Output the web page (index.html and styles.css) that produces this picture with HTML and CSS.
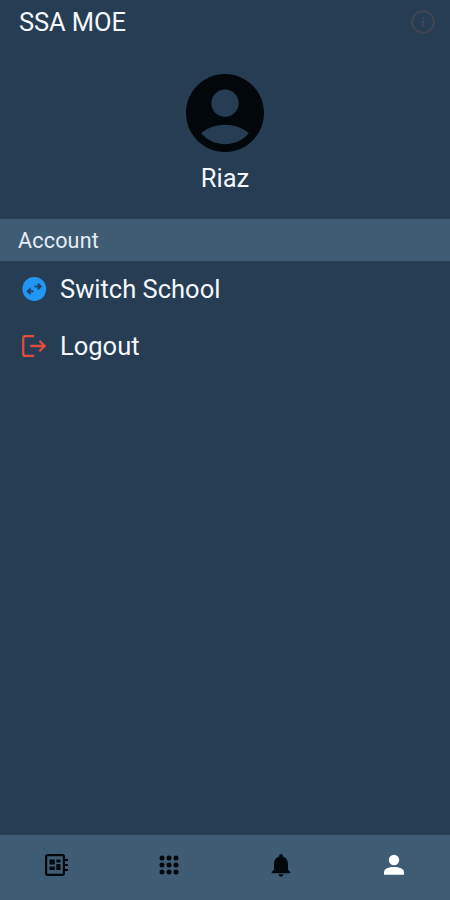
FILE: index.html
```html
<!DOCTYPE html>
<html lang="en">
<head>
<meta charset="utf-8">
<title>SSA MOE</title>
<link rel="stylesheet" href="styles.css">
</head>
<body>
<header class="bar">
  <h1 class="title">SSA MOE</h1>
  <svg class="info" viewBox="0 0 24 24"><circle cx="12" cy="12" r="10"/><path d="M12 11v5M12 7.500v2"/></svg>
</header>
<section class="profile">
  <svg class="avatar" viewBox="2 2 20 20"><path d="M12 2C6.48 2 2 6.48 2 12s4.48 10 10 10 10-4.48 10-10S17.52 2 12 2zm0 4c1.93 0 3.5 1.57 3.5 3.5S13.93 13 12 13s-3.5-1.57-3.5-3.5S10.07 6 12 6zm0 14c-2.03 0-4.43-.82-6.14-2.88a9.947 9.947 0 0 1 12.28 0C16.43 19.18 14.03 20 12 20z"/></svg>
  <div class="name">Riaz</div>
</section>
<h2 class="section">Account</h2>
<main class="menu">
  <a class="item">
    <svg class="icon" viewBox="0 0 28 28"><circle cx="14.3" cy="14" r="11.9" fill="#2196f3"/><path class="arrows" d="M14.500 11.500h6M17.800 8.700l2.900 2.800-2.900 2.800M13.500 16.200H8M10.600 13.400l-2.900 2.800 2.900 2.800"/></svg>
    <span>Switch School</span>
  </a>
  <a class="item">
    <svg class="icon logout" viewBox="0 0 28 28"><path d="M14.2 4.1H5.4Q3.2 4.1 3.2 6.3v15.4q0 2.2 2.2 2.2h8.8M10.2 14h14.5M19.4 8.8l5.3 5.2-5.3 5.2"/></svg>
    <span>Logout</span>
  </a>
</main>
<nav class="tabs">
  <a class="tab"><svg class="tab-icon" viewBox="0 0 28 28"><path class="board" d="M5.7 4.2h14.6q1.6 0 1.6 1.6v16.4q0 1.6-1.6 1.6H5.7q-1.6 0-1.6-1.6V5.8q0-1.6 1.6-1.6zM22 9h4M22 14h4M22 19h4"/><path d="M7.5 8.5h5.3v5H7.5zM14.3 8.5h4.2v3h-4.200zM7.5 15.500h5.3v3.600H7.500zM14.3 13h4.200v6.100h-4.200z"/></svg></a>
  <a class="tab"><svg class="tab-icon" viewBox="0 0 28 28"><circle cx="7" cy="7" r="2.500"/><circle cx="14" cy="7" r="2.500"/><circle cx="21" cy="7" r="2.500"/><circle cx="7" cy="14" r="2.500"/><circle cx="14" cy="14" r="2.500"/><circle cx="21" cy="14" r="2.500"/><circle cx="7" cy="21" r="2.500"/><circle cx="14" cy="21" r="2.500"/><circle cx="21" cy="21" r="2.500"/></svg></a>
  <a class="tab"><svg class="tab-icon" viewBox="0 0 24 24"><path d="M12 22c1.1 0 2-.9 2-2h-4c0 1.100.9 2 2 2zm6-6v-5c0-3.070-1.640-5.640-4.500-6.320V4c0-.83-.67-1.500-1.500-1.500s-1.500.67-1.500 1.500v.68C7.630 5.360 6 7.920 6 11v5l-2 2v1h16v-1l-2-2z"/></svg></a>
  <a class="tab active"><svg class="tab-icon" viewBox="0 0 28 28"><circle cx="14" cy="9" r="5.2"/><path d="M4 23.800v-2.600C4 17.500 9 16 14 16s10 1.500 10 5.200v2.600z"/></svg></a>
</nav>
</body>
</html>
```
FILE: styles.css
```css
* { box-sizing: border-box; }
body {
  margin: 0;
  height: 900px;
  display: flex;
  flex-direction: column;
  background: #263d54;
  color: #f4f8fc;
  font-family: Roboto, sans-serif;
}
h1, h2 { margin: 0; font-weight: 400; }
.bar {
  height: 43px;
  padding: 0 14px 0 19px;
  display: flex;
  align-items: center;
  justify-content: space-between;
}
.title { font-size: 25.5px; letter-spacing: -0.1px; }
.info {
  width: 26px;
  height: 26px;
  fill: none;
  stroke: #424653;
  stroke-width: 1.8;
}
.profile {
  height: 176px;
  padding-top: 31px;
  display: flex;
  flex-direction: column;
  align-items: center;
}
.avatar { width: 78px; height: 78px; fill: #02070b; }
.name { font-size: 25.5px; line-height: 30px; margin-top: 11px; }
.section {
  height: 42px;
  padding-left: 18px;
  line-height: 43px;
  font-size: 21.5px;
  letter-spacing: 0.2px;
  background: #3f5c75;
  color: #e6eef5;
}
.menu { flex: 1; }
.item {
  height: 56.5px;
  padding-left: 20px;
  display: flex;
  align-items: center;
  gap: 12px;
  font-size: 25.5px;
}
.icon { width: 28px; height: 28px; }
.arrows { fill: none; stroke: #1d4468; stroke-width: 1.9; }
.logout { fill: none; stroke: #e34b40; stroke-width: 2.3; }
.tabs {
  height: 65px;
  padding-bottom: 5px;
  display: flex;
  background: #3f5c75;
}
.tab {
  flex: 1;
  display: flex;
  align-items: center;
  justify-content: center;
  fill: #03080d;
}
.active { fill: #fff; }
.tab-icon { width: 28px; height: 28px; }
.board { fill: none; stroke: #03080d; stroke-width: 2.2; }
```
